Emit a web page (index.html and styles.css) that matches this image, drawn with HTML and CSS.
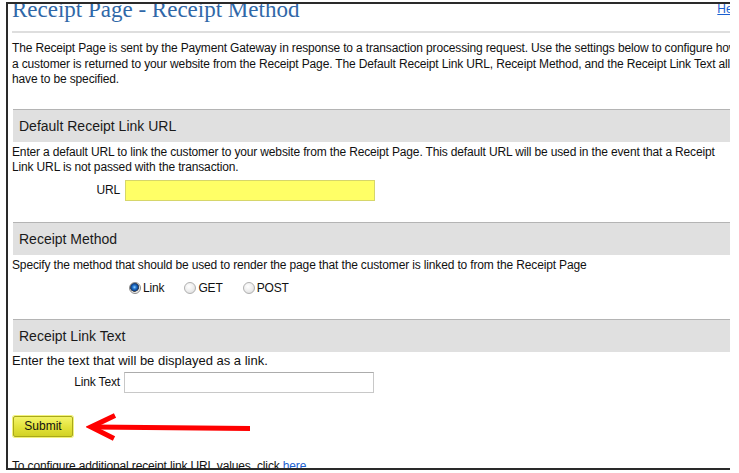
FILE: index.html
```html
<!DOCTYPE html>
<html>
<head>
<meta charset="utf-8">
<title>Receipt Page - Receipt Method</title>
<link rel="stylesheet" href="styles.css">
</head>
<body>
<div class="frame">
  <div class="page">
    <div class="title-row">
      <h1 class="title">Receipt Page - Receipt Method</h1>
      <a class="help" href="#">Help</a>
    </div>
    <div class="rule"></div>
    <p class="intro">The Receipt Page is sent by the Payment Gateway in response to a transaction processing request. Use the settings below to configure how a customer is returned to your website from the Receipt Page. The Default Receipt Link URL, Receipt Method, and the Receipt Link Text all have to be specified.</p>

    <div class="section">
      <h2 class="section-head">Default Receipt Link URL</h2>
      <p class="desc">Enter a default URL to link the customer to your website from the Receipt Page. This default URL will be used in the event that a Receipt Link URL is not passed with the transaction.</p>
      <div class="field">
        <label class="field-label">URL</label>
        <input class="text-input url-input" type="text">
      </div>
    </div>

    <div class="section">
      <h2 class="section-head">Receipt Method</h2>
      <p class="desc">Specify the method that should be used to render the page that the customer is linked to from the Receipt Page</p>
      <div class="field radio-field">
        <span class="field-label"></span>
        <div class="radios">
          <label class="radio-item"><input class="radio" type="radio" name="method" checked><span>Link</span></label>
          <label class="radio-item"><input class="radio" type="radio" name="method"><span>GET</span></label>
          <label class="radio-item"><input class="radio" type="radio" name="method"><span>POST</span></label>
        </div>
      </div>
    </div>

    <div class="section">
      <h2 class="section-head">Receipt Link Text</h2>
      <p class="desc desc-large">Enter the text that will be displayed as a link.</p>
      <div class="field field-tight">
        <label class="field-label">Link Text</label>
        <input class="text-input link-input" type="text">
      </div>
    </div>

    <div class="submit-row">
      <button class="submit" type="button">Submit</button>
      <svg class="arrow" width="168" height="30" viewBox="0 0 168 30">
        <path d="M164 16.5 L8 15" stroke="#f00" stroke-width="5" fill="none"/>
        <path d="M29 3.5 L5 15 L28 26.5" stroke="#f00" stroke-width="5" fill="none" stroke-linejoin="miter"/>
      </svg>
    </div>

    <p class="footer">To configure additional receipt link URL values, click <a href="#">here</a></p>
  </div>
</div>
</body>
</html>
```
FILE: styles.css
```css
html, body {
  margin: 0;
  padding: 0;
  background: #fff;
}

body {
  font-family: "Liberation Sans", Arial, sans-serif;
  font-size: 12px;
  letter-spacing: -0.15px;
  color: #111;
}

.frame {
  margin: 2px 0 0 6px;
  width: 722px;
  height: 464px;
  border-top: 2px solid #2a2a2a;
  border-left: 2px solid #2a2a2a;
  border-bottom: 2px solid #2a2a2a;
  overflow: hidden;
}

.page {
  width: 731px;
  padding-left: 4px;
  box-sizing: border-box;
}

.title-row {
  display: flex;
  justify-content: space-between;
  align-items: flex-start;
  height: 26px;
  margin-top: -8px;
}

.title {
  margin: 1px 0 0;
  font-family: "Liberation Serif", "Times New Roman", serif;
  font-weight: normal;
  font-size: 23px;
  line-height: 26px;
  letter-spacing: 0;
  color: #3068a8;
}

.help {
  margin-top: 6px;
  margin-right: -3px;
  line-height: 15px;
  color: #1a5fd0;
  letter-spacing: 0;
  text-decoration: underline;
}

.rule {
  margin-top: 9px;
  height: 2px;
  background: #dedede;
}

.intro {
  margin: 8px 0 0;
  line-height: 15.5px;
}

.section {
  margin-top: 21px;
}

.section-head {
  margin: 0 0 0 1px;
  height: 32px;
  line-height: 32px;
  padding-left: 6px;
  border-top: 1px solid #b4b4b4;
  background: #e0e0e0;
  font-size: 14px;
  font-weight: normal;
  letter-spacing: 0;
  color: #1a1a1a;
}

.desc {
  margin: 3px 0 0;
  line-height: 15.5px;
}

.desc-large {
  margin-top: 1px;
  font-size: 13px;
  letter-spacing: 0;
}

.field {
  display: grid;
  grid-template-columns: 108px auto;
  column-gap: 4px;
  align-items: center;
  justify-content: start;
  margin-top: 4px;
  height: 21px;
}

.field-tight {
  margin-top: 3px;
}

.field-label {
  text-align: right;
}

.text-input {
  margin: 0;
  box-sizing: border-box;
  height: 21px;
  padding: 0 3px;
  font-family: inherit;
  font-size: 12px;
  outline: none;
}

.url-input {
  width: 250px;
  margin-left: 1px;
  background: #ffff66;
  border: 1px solid #d6d66a;
}

.link-input {
  width: 250px;
  background: #fff;
  border: 1px solid #c8c8c8;
  border-top-color: #acacac;
}

.radio-field {
  margin-top: 5px;
  height: 20px;
}

.radios {
  display: flex;
  align-items: center;
  gap: 20px;
  padding-left: 5px;
}

.radio-item {
  display: flex;
  align-items: center;
  gap: 2px;
}

.radio {
  appearance: none;
  -webkit-appearance: none;
  margin: 0;
  width: 12px;
  height: 12px;
  border-radius: 50%;
  border: 1px solid #b0b0b0;
  background: radial-gradient(circle at 40% 35%, #ffffff 0, #ececec 55%, #d4d4d4 100%);
}

.radio:checked {
  border-color: #8a8a8a;
  background: radial-gradient(circle at 45% 42%, #9ad6ff 0, #2d7fd6 1.6px, #0b3f8a 3.6px, #4a4a4a 4.3px, #e8e8e8 4.8px, #f6f6f6 100%);
}

.submit-row {
  display: flex;
  align-items: center;
  margin-top: 23px;
  height: 21px;
}

.submit {
  margin: 0 0 0 1px;
  width: 60px;
  height: 21px;
  padding: 0;
  border: 1px solid #a8a81c;
  border-radius: 2px;
  background: linear-gradient(#f4f46a, #e2e23a 55%, #d2d226);
  box-shadow: 0 0 0 1px #f2f27a;
  font-family: inherit;
  font-size: 12px;
  letter-spacing: 0;
  color: #111;
}

.arrow {
  margin-left: 13px;
  margin-top: 2px;
  flex: none;
}

.footer {
  margin: 22px 0 0;
  line-height: 15.5px;
}

.footer a {
  color: #1a5fd0;
  text-decoration: none;
}
```
